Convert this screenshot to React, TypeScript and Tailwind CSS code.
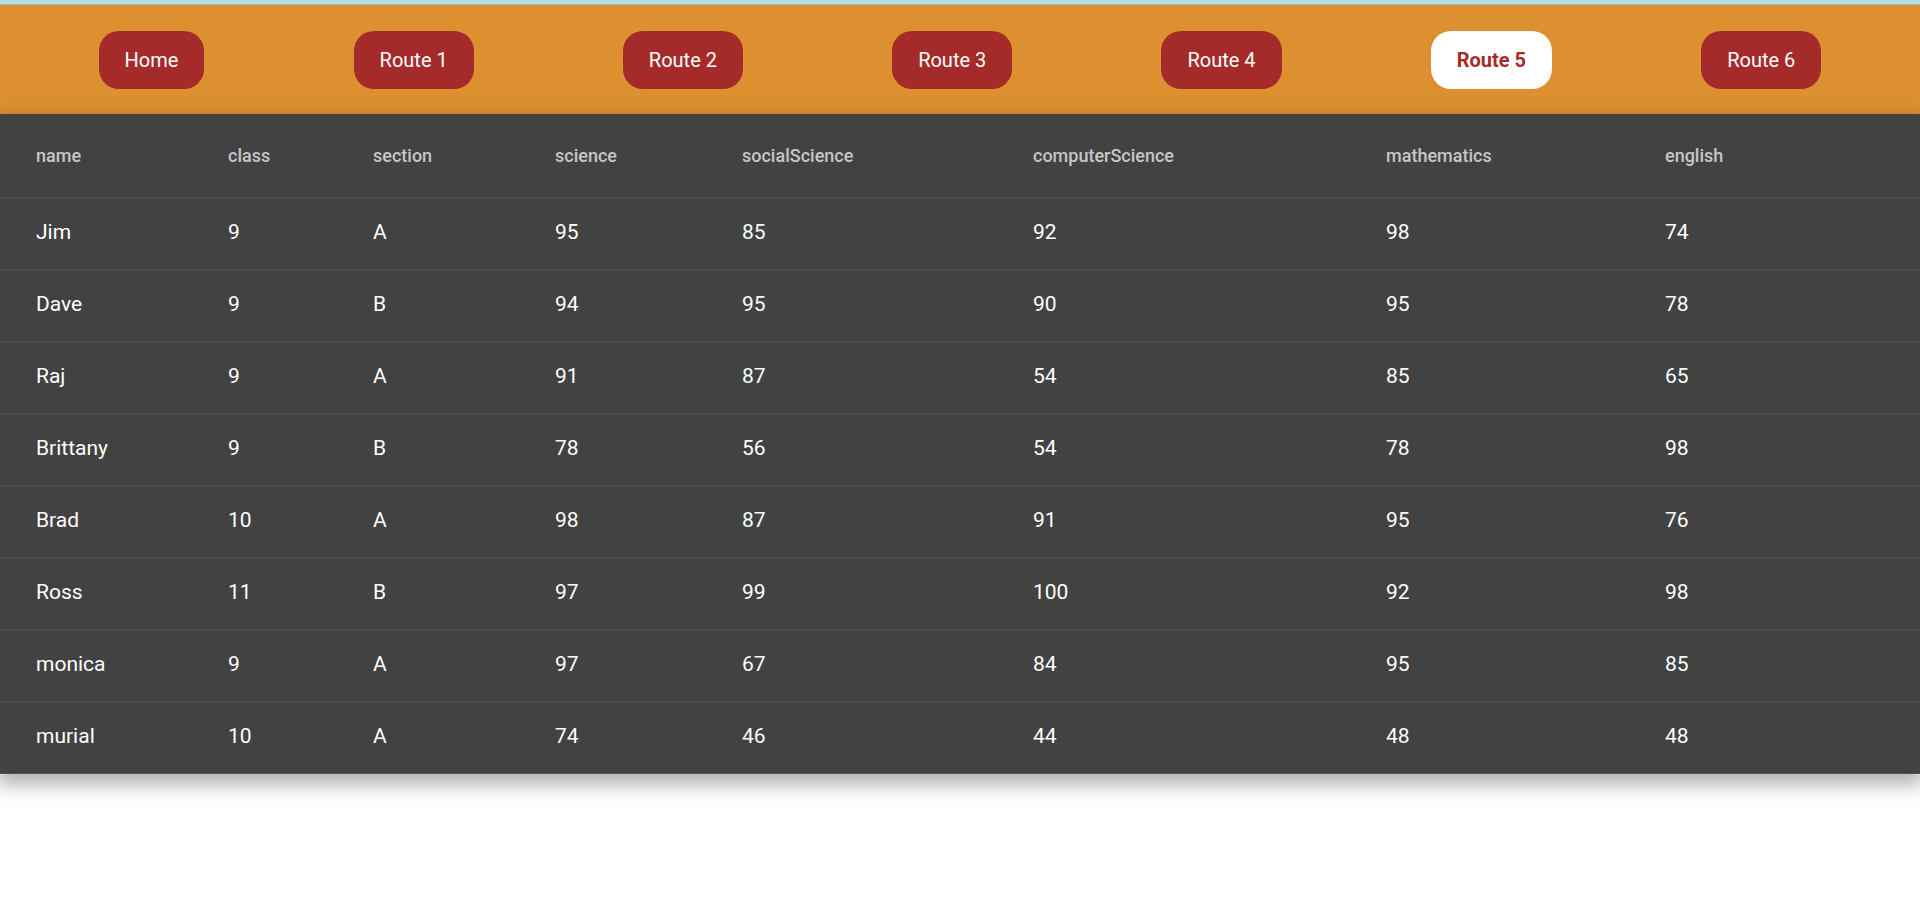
import React from "react";

const routes = ["Home", "Route 1", "Route 2", "Route 3", "Route 4", "Route 5", "Route 6"];
const cols = ["name", "class", "section", "science", "socialScience", "computerScience", "mathematics", "english"];
const widths = ["w-[192px]", "w-[145px]", "w-[182px]", "w-[187px]", "w-[291px]", "w-[353px]", "w-[279px]", "w-[291px]"];
const rows: (string | number)[][] = [
  ["Jim", 9, "A", 95, 85, 92, 98, 74],
  ["Dave", 9, "B", 94, 95, 90, 95, 78],
  ["Raj", 9, "A", 91, 87, 54, 85, 65],
  ["Brittany", 9, "B", 78, 56, 54, 78, 98],
  ["Brad", 10, "A", 98, 87, 91, 95, 76],
  ["Ross", 11, "B", 97, 99, 100, 92, 98],
  ["monica", 9, "A", 97, 67, 84, 95, 85],
  ["murial", 10, "A", 74, 46, 44, 48, 48],
];

export default function App() {
  return (
    <div className="min-h-[910px] bg-white font-['Roboto','Liberation_Sans',sans-serif]">
      <div className="h-[4px] bg-[#b0e0e6]" />
      <div className="h-[1px] bg-[#a3bdb6]" />
      <nav className="flex h-[109px] items-center justify-around bg-[#dc902f] px-[24px]">
        {routes.map((r) => (
          <div
            key={r}
            className={
              r === "Route 5"
                ? "flex h-[58px] items-center rounded-[20px] bg-white px-[26px] text-[20px] font-bold text-[#a52a2a]"
                : "flex h-[58px] items-center rounded-[20px] bg-[#a52a2a] px-[26px] text-[20px] text-white"
            }
          >
            {r}
          </div>
        ))}
      </nav>
      <div className="bg-[#424242] shadow-[0_8px_18px_3px_rgba(0,0,0,0.3)]">
        <table className="w-full table-fixed border-collapse">
          <thead>
            <tr className="h-[83px] border-b border-[#515151]">
              {cols.map((c, i) => (
                <th
                  key={c}
                  className={`${widths[i]} pl-[36px] text-left align-middle text-[18px] font-medium text-[#c6c6c6]`}
                >
                  {c}
                </th>
              ))}
            </tr>
          </thead>
          <tbody>
            {rows.map((row, ri) => (
              <tr key={ri} className="h-[72px] border-b border-[#515151]">
                {row.map((v, ci) => (
                  <td key={ci} className="pl-[36px] text-left align-middle text-[21px] text-white">
                    {v}
                  </td>
                ))}
              </tr>
            ))}
          </tbody>
        </table>
      </div>
    </div>
  );
}
